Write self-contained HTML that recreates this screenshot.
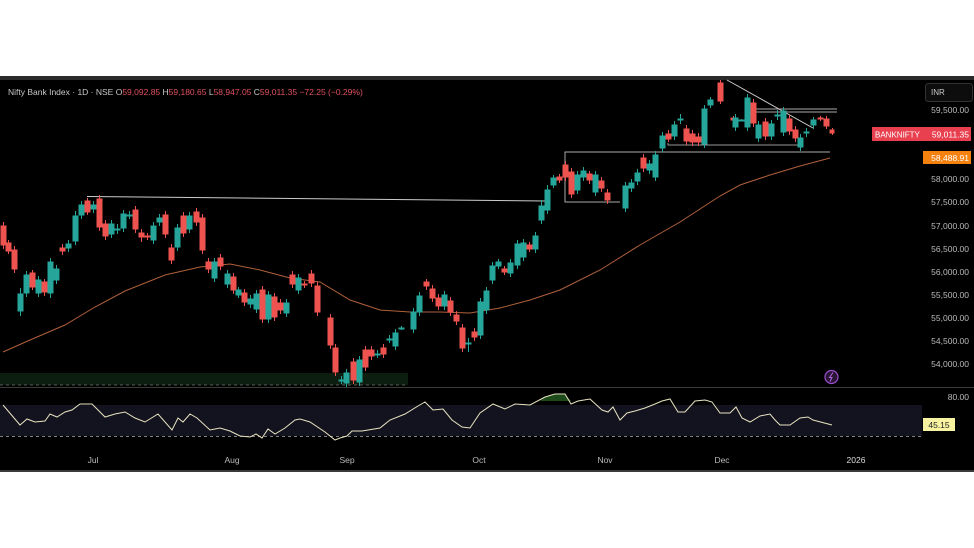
<!DOCTYPE html>
<html><head><meta charset="utf-8"><style>
html,body{margin:0;padding:0;background:#fff;width:974px;height:548px;overflow:hidden}
svg{display:block}
text{font-family:"Liberation Sans",sans-serif}
</style></head><body>
<svg width="974" height="548" viewBox="0 0 974 548" xmlns="http://www.w3.org/2000/svg">
<rect x="0" y="76" width="974" height="396" fill="#000"/>
<rect x="0" y="76" width="974" height="4" fill="#2a2a2a"/>
<rect x="0" y="470" width="974" height="2" fill="#3a3a3a"/>
<line x1="0" y1="387.5" x2="974" y2="387.5" stroke="#3a3a3a"/>
<!-- green zone -->
<rect x="0" y="373" width="408" height="12" fill="#0c1e10"/>
<line x1="0" y1="385" x2="408" y2="385" stroke="#777" stroke-dasharray="3,3" stroke-width="0.8"/>
<!-- RSI band -->
<rect x="0" y="405" width="922" height="31" fill="#13121f"/>
<line x1="0" y1="436.5" x2="922" y2="436.5" stroke="#aaa" stroke-dasharray="3,3" stroke-width="0.8"/>
<!-- MA -->
<polyline fill="none" stroke="#b0603a" stroke-width="1" points="3,352 30,340 65,325 95,307 125,291 165,275 200,267 230,264 260,270 290,278 320,282 350,300 380,310 410,312 440,312 470,313 500,308 530,300 560,290 600,270 640,245 680,222 720,196 740,185 770,175 800,166 830,158"/>
<!-- drawings -->
<line x1="87" y1="196.5" x2="545" y2="201" stroke="#ccc" stroke-width="1"/>
<polyline fill="none" stroke="#aaa" stroke-width="1" points="620,202 565,202 565,152 830,152"/>
<polyline fill="none" stroke="#999" stroke-width="1" points="668,143 668,145 802,145"/>
<line x1="753" y1="109" x2="837" y2="109" stroke="#aaa"/>
<line x1="753" y1="112" x2="837" y2="112" stroke="#aaa"/>
<line x1="727" y1="80" x2="813" y2="128" stroke="#ccc"/>
<g id="c"></g>
<!-- candles -->
<g stroke-width="1">
<g fill="#ef5350" stroke="#ef5350">
<path d="M3.5,222V249M8.5,240V254M14.5,246V273M32.5,270V290M44.5,279V296M62.5,244V255M87.5,198V215M99.5,195V231M105.5,220V240M135.5,206V233M141.5,229V242M147.5,233V240M165.5,211V238M171.5,244V264M183.5,212V237M196.5,208V226M202.5,214V254M208.5,258V273M220.5,254V270M233.5,273V294M244.5,289V306M262.5,286V323M274.5,293V321M280.5,299V314M292.5,271V288M304.5,281V288M311.5,270V287M317.5,282V316M330.5,314V349M335.5,344V376M353.5,358V384M365.5,346V371M371.5,346V360M383.5,344V358M426.5,279V290M432.5,285V302M438.5,294V310M450.5,297V316M456.5,311V325M462.5,324V352M474.5,328V341M504.5,266V275M529.5,242V252M559.5,174V183M565.5,161V181M571.5,168V198M589.5,171V184M601.5,177V192M607.5,189V204M643.5,154V172M668.5,130V142M686.5,125V145M692.5,130V146M698.5,133V146M720.5,80V104M733.5,116V122M753.5,99V127M765.5,118V140M789.5,115V135M795.5,126V142M820.5,116V121M826.5,116V129M832.5,128V135"/>
<rect x="1" y="226" width="5" height="19"/><rect x="6" y="243" width="5" height="8"/><rect x="12" y="250" width="5" height="19"/><rect x="30" y="273" width="5" height="14"/><rect x="42" y="282" width="5" height="10"/><rect x="60" y="248" width="5" height="3"/><rect x="85" y="201" width="5" height="11"/><rect x="97" y="199" width="5" height="28"/><rect x="103" y="224" width="5" height="12"/><rect x="133" y="210" width="5" height="19"/><rect x="139" y="233" width="5" height="4"/><rect x="145" y="236" width="5" height="1"/><rect x="163" y="215" width="5" height="19"/><rect x="169" y="248" width="5" height="12"/><rect x="181" y="216" width="5" height="17"/><rect x="194" y="212" width="5" height="10"/><rect x="200" y="218" width="5" height="32"/><rect x="206" y="262" width="5" height="7"/><rect x="218" y="258" width="5" height="8"/><rect x="231" y="277" width="5" height="13"/><rect x="242" y="293" width="5" height="9"/><rect x="260" y="290" width="5" height="29"/><rect x="272" y="297" width="5" height="20"/><rect x="278" y="303" width="5" height="7"/><rect x="290" y="275" width="5" height="9"/><rect x="302" y="284" width="5" height="1"/><rect x="309" y="274" width="5" height="9"/><rect x="315" y="286" width="5" height="26"/><rect x="328" y="318" width="5" height="27"/><rect x="333" y="348" width="5" height="24"/><rect x="351" y="362" width="5" height="18"/><rect x="363" y="350" width="5" height="17"/><rect x="369" y="350" width="5" height="6"/><rect x="381" y="348" width="5" height="6"/><rect x="424" y="282" width="5" height="4"/><rect x="430" y="289" width="5" height="9"/><rect x="436" y="298" width="5" height="8"/><rect x="448" y="301" width="5" height="11"/><rect x="454" y="315" width="5" height="6"/><rect x="460" y="328" width="5" height="20"/><rect x="472" y="332" width="5" height="5"/><rect x="502" y="269" width="5" height="3"/><rect x="527" y="245" width="5" height="4"/><rect x="557" y="177" width="5" height="3"/><rect x="563" y="165" width="5" height="12"/><rect x="569" y="172" width="5" height="22"/><rect x="587" y="174" width="5" height="6"/><rect x="599" y="181" width="5" height="7"/><rect x="605" y="193" width="5" height="7"/><rect x="641" y="158" width="5" height="10"/><rect x="666" y="134" width="5" height="5"/><rect x="684" y="129" width="5" height="12"/><rect x="690" y="134" width="5" height="8"/><rect x="696" y="137" width="5" height="5"/><rect x="718" y="83" width="5" height="18"/><rect x="731" y="118" width="5" height="2"/><rect x="751" y="103" width="5" height="20"/><rect x="763" y="122" width="5" height="14"/><rect x="787" y="119" width="5" height="12"/><rect x="793" y="130" width="5" height="8"/><rect x="818" y="118" width="5" height="1"/><rect x="824" y="119" width="5" height="7"/><rect x="830" y="130" width="4" height="3"/>
</g>
<g fill="#26a69a" stroke="#26a69a">
<path d="M20.5,288V316M26.5,271V297M38.5,276V297M50.5,258V298M56.5,265V284M68.5,240V252M75.5,211V245M81.5,201V219M93.5,201V213M111.5,220V238M117.5,224V234M123.5,210V232M129.5,211V219M153.5,222V244M159.5,214V226M177.5,224V251M189.5,212V233M214.5,258V282M227.5,270V288M238.5,287V298M250.5,295V308M256.5,290V313M268.5,291V323M286.5,299V317M298.5,274V294M341.5,376V384M346.5,369V387M359.5,356V386M377.5,350V358M389.5,335V343M395.5,329V350M401.5,326V330M413.5,308V333M419.5,292V316M444.5,291V310M468.5,338V352M480.5,298V339M486.5,287V314M492.5,262V284M498.5,259V269M510.5,259V277M517.5,240V269M523.5,239V261M535.5,232V253M541.5,200V224M547.5,185V214M553.5,175V188M577.5,171V194M583.5,167V181M595.5,171V196M625.5,182V212M631.5,179V192M637.5,169V185M649.5,160V174M655.5,151V181M662.5,132V152M674.5,121V140M680.5,114V124M704.5,105V148M710.5,97V108M735.5,114V131M741.5,119V121M747.5,94V131M758.5,121V142M771.5,120V140M777.5,110V120M783.5,107V136M800.5,134V151M806.5,128V137M813.5,117V129"/>
<rect x="18" y="294" width="5" height="17"/><rect x="24" y="275" width="5" height="18"/><rect x="36" y="280" width="5" height="13"/><rect x="48" y="262" width="5" height="31"/><rect x="54" y="269" width="5" height="11"/><rect x="66" y="244" width="5" height="4"/><rect x="73" y="216" width="5" height="25"/><rect x="79" y="205" width="5" height="10"/><rect x="91" y="205" width="5" height="4"/><rect x="109" y="224" width="5" height="10"/><rect x="115" y="229" width="5" height="1"/><rect x="121" y="214" width="5" height="14"/><rect x="127" y="215" width="5" height="1"/><rect x="151" y="226" width="5" height="14"/><rect x="157" y="218" width="5" height="4"/><rect x="175" y="228" width="5" height="19"/><rect x="187" y="216" width="5" height="13"/><rect x="212" y="262" width="5" height="16"/><rect x="225" y="274" width="5" height="10"/><rect x="236" y="290" width="5" height="5"/><rect x="248" y="299" width="5" height="5"/><rect x="254" y="294" width="5" height="15"/><rect x="266" y="295" width="5" height="24"/><rect x="284" y="303" width="5" height="10"/><rect x="296" y="278" width="5" height="12"/><rect x="339" y="380" width="5" height="1"/><rect x="344" y="373" width="5" height="10"/><rect x="357" y="360" width="5" height="22"/><rect x="375" y="354" width="5" height="1"/><rect x="387" y="339" width="5" height="1"/><rect x="393" y="333" width="5" height="13"/><rect x="399" y="328" width="5" height="1"/><rect x="411" y="312" width="5" height="17"/><rect x="417" y="296" width="5" height="16"/><rect x="442" y="295" width="5" height="11"/><rect x="466" y="343" width="5" height="1"/><rect x="478" y="302" width="5" height="33"/><rect x="484" y="291" width="5" height="19"/><rect x="490" y="266" width="5" height="14"/><rect x="496" y="262" width="5" height="4"/><rect x="508" y="263" width="5" height="10"/><rect x="515" y="244" width="5" height="21"/><rect x="521" y="243" width="5" height="14"/><rect x="533" y="236" width="5" height="13"/><rect x="539" y="206" width="5" height="14"/><rect x="545" y="190" width="5" height="20"/><rect x="551" y="178" width="5" height="7"/><rect x="575" y="175" width="5" height="15"/><rect x="581" y="171" width="5" height="6"/><rect x="593" y="175" width="5" height="17"/><rect x="623" y="186" width="5" height="22"/><rect x="629" y="183" width="5" height="5"/><rect x="635" y="173" width="5" height="8"/><rect x="647" y="164" width="5" height="6"/><rect x="653" y="155" width="5" height="22"/><rect x="660" y="136" width="5" height="12"/><rect x="672" y="125" width="5" height="11"/><rect x="678" y="119" width="5" height="1"/><rect x="702" y="109" width="5" height="35"/><rect x="708" y="100" width="5" height="5"/><rect x="733" y="118" width="5" height="9"/><rect x="739" y="120" width="5" height="1"/><rect x="745" y="98" width="5" height="29"/><rect x="756" y="125" width="5" height="13"/><rect x="769" y="124" width="5" height="12"/><rect x="775" y="115" width="5" height="1"/><rect x="781" y="111" width="5" height="21"/><rect x="798" y="138" width="5" height="9"/><rect x="804" y="132" width="5" height="1"/><rect x="811" y="120" width="5" height="5"/>
</g>
</g>
<!-- RSI -->
<path d="M540,401 L545,397 555,394 565,394 571,401 Z" fill="#1d4a1a"/>
<polyline fill="none" stroke="#e8e4c0" stroke-width="1" points="3,405 20,425 27,419 35,422 45,421 50,414 57,417 65,412 72,410 80,404 92,404 105,417 115,414 125,412 135,418 145,422 158,414 172,430 178,418 183,422 190,414 197,418 210,430 220,428 230,431 240,436 250,437 256,434 262,438 268,429 275,434 285,428 295,420 300,419 310,422 325,432 335,440 340,438 347,436 352,431 362,431 380,428 390,420 405,414 418,406 425,402 433,410 443,409 452,420 462,427 470,428 480,413 493,404 505,409 515,404 530,405 545,397 555,394 565,394 571,404 578,401 590,399 602,410 608,412 613,407 620,420 627,413 635,411 645,408 655,404 662,401 670,399 678,412 685,412 695,401 705,400 712,402 720,413 730,413 736,407 742,418 750,422 760,416 770,414 775,420 780,425 790,425 800,418 808,417 813,420 832,425"/>
<!-- header -->
<text x="8" y="95" font-size="8.5" fill="#c8c8c8">Nifty Bank Index · 1D · NSE <tspan fill="#c8c8c8">O</tspan><tspan fill="#e0505e">59,092.85 </tspan><tspan fill="#c8c8c8">H</tspan><tspan fill="#e0505e">59,180.65 </tspan><tspan fill="#c8c8c8">L</tspan><tspan fill="#e0505e">58,947.05 </tspan><tspan fill="#c8c8c8">C</tspan><tspan fill="#e0505e">59,011.35   −72.25 (−0.29%)</tspan></text>
<!-- right axis -->
<rect x="925.5" y="83.5" width="47" height="18" rx="3" fill="#0d0d0d" stroke="#333"/>
<text x="931" y="95" font-size="8" fill="#ccc">INR</text>
<g font-size="8.5" fill="#bbb" text-anchor="end">
<text x="969" y="113">59,500.00</text>
<text x="969" y="182">58,000.00</text>
<text x="969" y="205">57,500.00</text>
<text x="969" y="229">57,000.00</text>
<text x="969" y="252">56,500.00</text>
<text x="969" y="275">56,000.00</text>
<text x="969" y="298">55,500.00</text>
<text x="969" y="321">55,000.00</text>
<text x="969" y="344">54,500.00</text>
<text x="969" y="367">54,000.00</text>
<text x="969" y="400">80.00</text>
</g>
<rect x="872" y="127" width="99" height="14" fill="#e8404f"/>
<text x="875" y="137.5" font-size="8" fill="#fff">BANKNIFTY</text>
<text x="969" y="137.5" font-size="8.5" fill="#fff" text-anchor="end">59,011.35</text>
<rect x="923" y="151" width="48" height="13" fill="#f5820f"/>
<text x="969" y="161" font-size="8.5" fill="#fff" text-anchor="end">58,488.91</text>
<rect x="923" y="418" width="32" height="13" fill="#f7f3a0"/>
<text x="939" y="428" font-size="8.5" fill="#222" text-anchor="middle">45.15</text>
<!-- time axis -->
<g font-size="8.5" fill="#bbb" text-anchor="middle">
<text x="93" y="463">Jul</text><text x="232" y="463">Aug</text><text x="347" y="463">Sep</text><text x="479" y="463">Oct</text><text x="605" y="463">Nov</text><text x="722" y="463">Dec</text><text x="856" y="463" fill="#ddd">2026</text>
</g>
<!-- lightning icon -->
<circle cx="831.5" cy="377" r="6.5" fill="#2a1535" stroke="#9c4fd0" stroke-width="1.2"/>
<path d="M833,372.5 L829.5,377.5 L832,377.5 L830,381.5" fill="none" stroke="#b06ae0" stroke-width="1"/>
</svg>
</body></html>
